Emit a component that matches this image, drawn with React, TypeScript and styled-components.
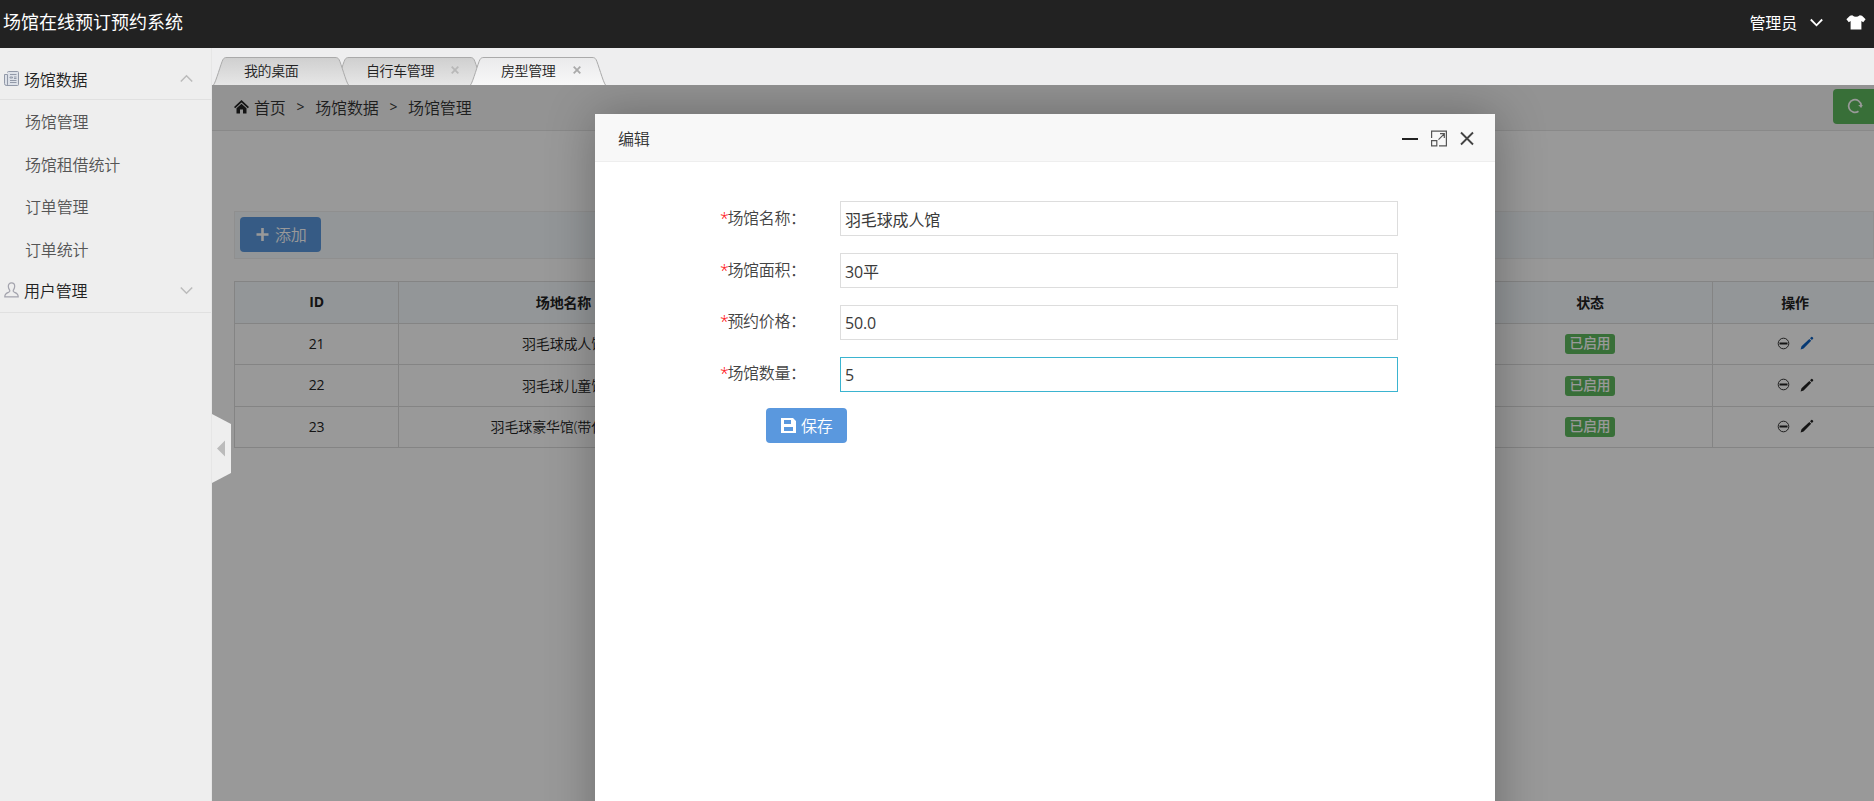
import React from "react";
import styled, { createGlobalStyle, css } from "styled-components";

const Global = createGlobalStyle`
  * { box-sizing: border-box; }
  html, body { margin: 0; padding: 0; overflow: hidden; }
  body {
    font-family: "Open Sans", "Noto Sans CJK SC", sans-serif;
    font-weight: 350;
    font-size: 16px;
    letter-spacing: -0.15px;
    color: #333;
  }
  button, input { font-family: inherit; font-weight: inherit; letter-spacing: inherit; }
`;

const Page = styled.div`
  display: flex;
  flex-direction: column;
  width: 100vw;
  height: 100vh;
  overflow: hidden;
`;

const TopBar = styled.header`
  display: flex;
  align-items: center;
  flex: 0 0 48px;
  padding: 0 8px 4px 3px;
  background: #222;
  color: #fff;
`;

const Brand = styled.div`
  flex: 1;
  font-size: 18px;
  font-weight: 400;
  letter-spacing: 0;
  line-height: 44px;
  height: 44px;
`;

const UserName = styled.span`
  margin-right: 13px;
  font-weight: 400;
  line-height: 46px;
  height: 44px;
`;

const ShirtIcon = styled.svg`
  margin-left: 23px;
`;

const Body = styled.div`
  display: flex;
  flex: 1;
  min-height: 0;
`;

const Sidebar = styled.nav`
  position: relative;
  flex: 0 0 212px;
  padding-top: 10px;
  background: #eee;
  border-right: 1px solid #e6e6e6;
`;

const MenuTitle = styled.div<{ $raise?: number }>`
  display: flex;
  align-items: center;
  height: 42px;
  padding: 0 18px ${(p) => p.$raise ?? 1}px 4px;
  border-bottom: 1px solid #e0e0e0;
  color: #222;
  span { flex: 1; margin-left: 5px; }
`;

const MenuItem = styled.div`
  height: 42.7px;
  padding-left: 25px;
  line-height: 44px;
  color: #555;
`;

const Handle = styled.div`
  position: absolute;
  left: 212px;
  top: 366px;
  width: 19px;
  height: 69px;
  z-index: 5;
  svg { display: block; }
`;

const Main = styled.main`
  display: flex;
  flex-direction: column;
  flex: 1;
  min-width: 0;
`;

const TabStrip = styled.div`
  display: flex;
  align-items: flex-end;
  flex: 0 0 37px;
  padding-left: 1px;
  background: #eeeeef;
`;

const TabBox = styled.div<{ $w: number; $z: number }>`
  position: relative;
  z-index: ${(p) => p.$z};
  width: ${(p) => p.$w}px;
  height: 28px;
  margin-right: -14px;
  > svg { position: absolute; left: 0; top: 0; }
`;

const TabText = styled.div`
  position: relative;
  display: flex;
  align-items: center;
  justify-content: space-between;
  height: 26px;
  padding: 0 25px 0 31px;
  font-size: 14px;
  letter-spacing: -0.4px;
  color: #222;
`;

const Frame = styled.section`
  position: relative;
  flex: 1;
  overflow: hidden;
  background: #fff;
`;

const Crumbs = styled.div`
  display: flex;
  align-items: center;
  height: 46px;
  padding: 0 0 2px 22px;
  background: #f5f5f5;
  border-bottom: 1px solid #e5e5e5;
  white-space: pre;
  > svg { margin-right: 5px; }
`;

const Gt = styled.span`
  width: 29.5px;
  text-align: center;
  font-size: 14px;
  font-weight: 400;
`;

const buttonShape = css`
  display: flex;
  align-items: center;
  height: 35px;
  border: 0;
  border-radius: 4px;
  color: #fff;
  font-size: 16px;
`;

const Refresh = styled.button`
  ${buttonShape}
  width: 60px;
  margin-left: auto;
  margin-right: -19px;
  margin-bottom: 1px;
  padding: 0 0 0 14px;
  background: #5eb95e;
`;

const PrimaryButton = styled.button`
  ${buttonShape}
  width: 81px;
  padding: 0 0 1px 15px;
  background: #5a98de;
  svg { margin-right: 5px; }
`;

const Tools = styled.div`
  height: 48px;
  margin: 80px 0 22px 22px;
  padding: 5px;
  background: #f5fafe;
  border: 1px solid #eee;
`;

const Grid = styled.div`
  width: 1644px;
  margin-left: 22px;
  border-top: 1px solid #ddd;
  border-left: 1px solid #ddd;
  font-size: 14px;
`;

const Row = styled.div<{ $head?: boolean; $h: number }>`
  display: grid;
  grid-template-columns: 164px 330px 739px 245px 165px;
  height: ${(p) => p.$h}px;
  background: ${(p) => (p.$head ? "#f5fafe" : "#fff")};
  font-weight: ${(p) => (p.$head ? 700 : "inherit")};
  color: #222;
`;

const Cell = styled.div`
  display: flex;
  align-items: center;
  justify-content: center;
  gap: 10px;
  padding-bottom: 2px;
  border-right: 1px solid #ddd;
  border-bottom: 1px solid #ddd;
  white-space: nowrap;
`;

const IdCell = styled(Cell)`
  font-weight: 400;
`;

const Badge = styled.span`
  height: 20px;
  margin-top: 2px;
  padding: 0 4px;
  border-radius: 3px;
  background: #5eb95e;
  color: #fff;
  letter-spacing: 0;
  font-size: 13.7px;
  line-height: 18px;
  font-weight: 500;
`;

const Shade = styled.div`
  position: absolute;
  inset: 0;
  background: rgba(0, 0, 0, 0.4);
`;

const Dialog = styled.div`
  position: absolute;
  left: 383px;
  top: 29px;
  width: 900px;
  height: 760px;
  background: #fff;
  border-radius: 2px;
  box-shadow: 1px 1px 50px rgba(0, 0, 0, 0.3);
`;

const DialogHead = styled.div`
  display: flex;
  align-items: center;
  height: 48px;
  padding: 0 20px 0 23px;
  background: #f8f8f8;
  border-bottom: 1px solid #eee;
  > span { flex: 1; }
`;

const Form = styled.form`
  display: flex;
  flex-direction: column;
  gap: 17px;
  padding-top: 39px;
`;

const Field = styled.label`
  display: flex;
  height: 35px;
  padding-left: 125px;
`;

const Label = styled.span<{ $lh: number }>`
  width: 120px;
  line-height: ${(p) => p.$lh}px;
  letter-spacing: -0.35px;
  color: #444;
`;

const Star = styled.span`
  margin-right: -1px;
  color: red;
`;

const Input = styled.input<{ $focus?: boolean }>`
  width: 558px;
  height: 35px;
  padding: 0 5px 0 4px;
  border: 1px solid ${(p) => (p.$focus ? "#3bb4d0" : "#ddd")};
  outline: 0;
  background: #fff;
  color: #3a3a3a;
  font-size: 16px;
  font-weight: 400;
`;

const Save = styled.div`
  margin: -1px 0 0 171px;
`;

function Chevron({ up, color, sw = 1.5 }: { up?: boolean; color: string; sw?: number }) {
  return (
    <svg width="13" height="9" viewBox="0 0 13 9" fill="none" stroke={color} strokeWidth={sw}>
      <path d={up ? "M.8 7.5 6.5 1.7l5.7 5.8" : "M.8 1.5 6.5 7.3l5.7-5.8"} />
    </svg>
  );
}

type TabProps = { w: number; z: number; label: string; active?: boolean; closable?: boolean };

function Tab({ w, z, label, active, closable }: TabProps) {
  const id = "tab" + z;
  return (
    <TabBox $w={w} $z={z}>
      <svg width={w} height="28">
        <defs>
          <linearGradient id={id} x1="0" y1="0" x2="0" y2="1">
            <stop offset="0" stopColor={active ? "#eaeaeb" : "#cfcfcf"} />
            <stop offset="1" stopColor={active ? "#f8f8f8" : "#e6e6e6"} />
          </linearGradient>
        </defs>
        <path
          d={`M.5 28C3 25 8 6 10 2.5 11 .9 12 .5 14 .5H${w - 14}C${w - 12} .5 ${w - 11} .9 ${w - 10} 2.5 ${w - 8} 6 ${w - 3} 25 ${w - 0.5} 28`}
          fill={`url(#${id})`}
          stroke="#aaa"
        />
      </svg>
      <TabText>
        {label}
        {closable && (
          <svg width="8" height="8" viewBox="0 0 8 8" stroke={active ? "#aaa" : "#b8b8b8"} strokeWidth="1.8">
            <path d="M.7.7l6.6 6.6M7.3.7.7 7.3" />
          </svg>
        )}
      </TabText>
    </TabBox>
  );
}

function Disable() {
  return (
    <svg width="13" height="13" viewBox="0 0 13 13" fill="none" stroke="#222">
      <circle cx="6.5" cy="6.5" r="5.3" strokeWidth=".9" />
      <path d="M2.5 6.5h8" strokeWidth="2" />
    </svg>
  );
}

function Pencil({ color }: { color: string }) {
  return (
    <svg width="14" height="14" viewBox="0 0 14 14" fill={color}>
      <path d="M.6 13.4 1.5 10.3 9.3 2.9l1.9 1.9-7.6 7.6zM10 2.2 11.3 1q.5-.4 1 0l.8.8q.4.5 0 1l-1.2 1.3z" />
    </svg>
  );
}

const rows = [
  { id: 21, name: "羽毛球成人馆", h: 41, color: "#0a5fc0" },
  { id: 22, name: "羽毛球儿童馆", h: 42, color: "#222" },
  { id: 23, name: "羽毛球豪华馆(带休息区)", h: 41, color: "#222" },
];

const fields = [
  { label: "场馆名称", value: "羽毛球成人馆", lh: 35 },
  { label: "场馆面积", value: "30平", lh: 35 },
  { label: "预约价格", value: "50.0", lh: 33 },
  { label: "场馆数量", value: "5", lh: 33, focus: true },
];

export default function App() {
  return (
    <Page>
      <Global />
      <TopBar>
        <Brand>场馆在线预订预约系统</Brand>
        <UserName>管理员</UserName>
        <Chevron color="#fff" sw={1.8} />
        <ShirtIcon width="20" height="15" viewBox="0 0 20 15" fill="#fff">
          <path d="M6.2.3Q10 3.4 13.8.3L16 .8 19.6 4.2 17.2 7.2 15.4 6V14.6H4.6V6L2.8 7.2.4 4.2 4 .8z" />
        </ShirtIcon>
      </TopBar>
      <Body>
        <Sidebar>
          <MenuTitle $raise={0}>
            <svg width="15" height="15" viewBox="0 0 15 15" fill="none" stroke="#9299a8">
              <path d="M3.5 1.5q0-1 1-1h9q1 0 1 1v12q0 1-1 1H2.5q-2 0-2-2v-9h3v9.5q0 1.5-1 1.5" fill="#dde1e8" />
              <path d="M6 3.5h6.5M6 6h2.5v1H6zM10 6h2.5M10 7.5h2.5M6 9.5h6.5M6 11.5h6.5" />
            </svg>
            <span>场馆数据</span>
            <Chevron up color="#bbb" />
          </MenuTitle>
          <MenuItem>场馆管理</MenuItem>
          <MenuItem>场馆租借统计</MenuItem>
          <MenuItem>订单管理</MenuItem>
          <MenuItem>订单统计</MenuItem>
          <MenuTitle $raise={2}>
            <svg width="15" height="16" viewBox="0 0 15 16" fill="none" stroke="#a3a3ad" strokeWidth="1.2">
              <path d="M7.5.8C5.5.8 4.3 2.3 4.3 4.2c0 2 .8 3 1.5 4.3.3 1-.2 1.5-1.4 1.9C2 11.2.8 12 .8 14.8h13.4c0-2.8-1.2-3.6-3.6-4.4-1.2-.4-1.7-.9-1.4-1.9.7-1.3 1.5-2.3 1.5-4.3C10.7 2.3 9.5.8 7.5.8z" />
            </svg>
            <span>用户管理</span>
            <Chevron color="#bbb" />
          </MenuTitle>
          <Handle>
            <svg width="19" height="69" viewBox="0 0 19 69">
              <path d="M0 0 19 10V59L0 69z" fill="#eee" />
              <path d="M5 34.5 13 26.5V42.5z" fill="#bbb" />
            </svg>
          </Handle>
        </Sidebar>
        <Main>
          <TabStrip>
            <Tab w={136} z={2} label="我的桌面" />
            <Tab w={149} z={1} label="自行车管理" closable />
            <Tab w={136} z={3} label="房型管理" active closable />
          </TabStrip>
          <Frame>
            <Crumbs>
              <svg width="15" height="14" viewBox="0 0 15 14" fill="#222">
                <path d="M7.5 0 15 7 13.8 8.2 7.5 2.4 1.2 8.2 0 7zM2.5 8.3 7.5 3.7 12.5 8.3V13.5H9V9.5H6V13.5H2.5z" />
              </svg>
              首页<Gt>&gt;</Gt>场馆数据<Gt>&gt;</Gt>场馆管理
              <Refresh>
                <svg width="16" height="16" viewBox="0 0 16 16" fill="none" stroke="#fff" strokeWidth="1.7">
                  <path d="M11.5 13.2A6.3 6.3 0 1 1 14.2 7.5" />
                  <path d="M11.2 7h4.6l-1.7 3z" fill="#fff" stroke="none" />
                </svg>
              </Refresh>
            </Crumbs>
            <Tools>
              <PrimaryButton>
                <svg width="15" height="13" viewBox="0 0 15 13" stroke="#fff" strokeWidth="2.6">
                  <path d="M1.5 6.5h12M7.5 0v13" />
                </svg>
                添加
              </PrimaryButton>
            </Tools>
            <Grid>
              <Row $head $h={42}>
                <Cell>ID</Cell>
                <Cell>场地名称</Cell>
                <Cell />
                <Cell>状态</Cell>
                <Cell>操作</Cell>
              </Row>
              {rows.map((r) => (
                <Row key={r.id} $h={r.h}>
                  <IdCell>{r.id}</IdCell>
                  <Cell>{r.name}</Cell>
                  <Cell />
                  <Cell><Badge>已启用</Badge></Cell>
                  <Cell><Disable /><Pencil color={r.color} /></Cell>
                </Row>
              ))}
            </Grid>
            <Shade />
            <Dialog>
              <DialogHead>
                <span>编辑</span>
                <svg width="72" height="18" viewBox="0 0 72 18" fill="none" overflow="visible">
                  <path d="M-1 10h16" stroke="#222" strokeWidth="2" />
                  <g stroke="#555" strokeWidth="1.2">
                    <path d="M28.6 9V2.1H43.4V16.9H36M28.6 11.7h5.2v5.2h-5.2zM35.5 10.7 41 5.2M37 4.7h4.3v4.3" />
                  </g>
                  <path d="M58 3.5 70 15.5M70 3.5 58 15.5" stroke="#444" strokeWidth="1.9" />
                </svg>
              </DialogHead>
              <Form>
                {fields.map((f) => (
                  <Field key={f.label}>
                    <Label $lh={f.lh}><Star>*</Star>{f.label}：</Label>
                    <Input defaultValue={f.value} $focus={f.focus} />
                  </Field>
                ))}
                <Save>
                  <PrimaryButton type="button">
                    <svg width="15" height="15" viewBox="0 0 15 15" fill="#fff" fillRule="evenodd">
                      <path d="M0 0H12L15 3V15H0zM3 2V6H10V2zM3 9V13H12V9z" />
                    </svg>
                    保存
                  </PrimaryButton>
                </Save>
              </Form>
            </Dialog>
          </Frame>
        </Main>
      </Body>
    </Page>
  );
}
